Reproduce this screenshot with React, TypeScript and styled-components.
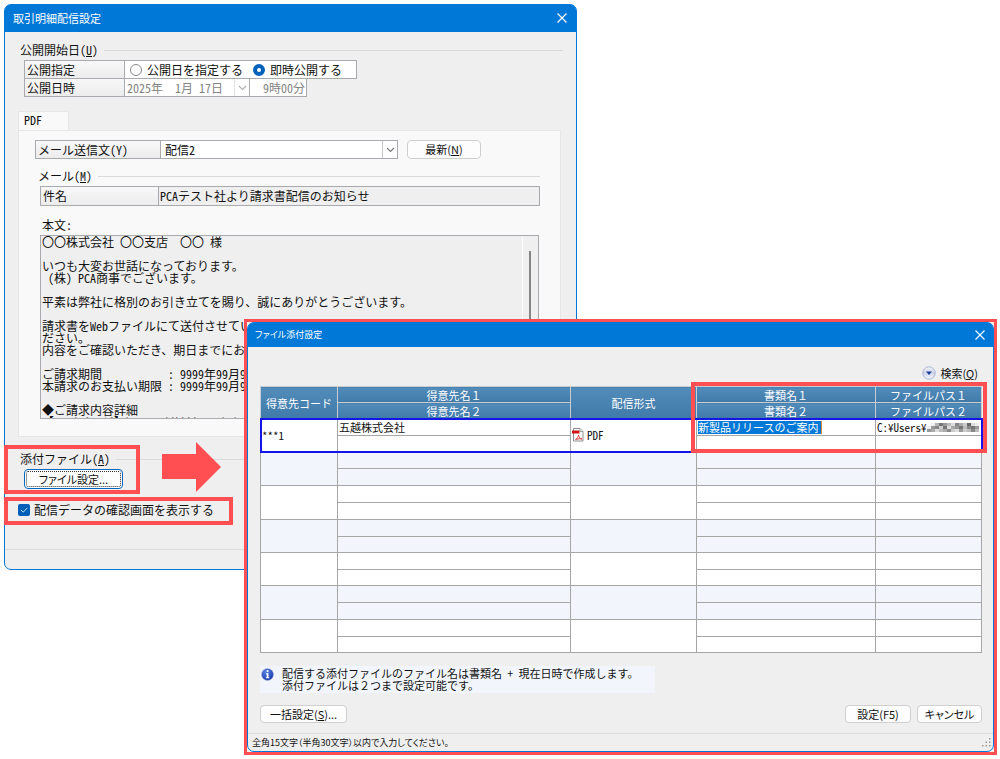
import React from "react";
import styled, { createGlobalStyle, css } from "styled-components";

const RED = "#ff4f52";
const BLUE = "#0078d7";

const GlobalStyle = createGlobalStyle`
  *, *::before, *::after { box-sizing: border-box; }
  body {
    margin: 0;
    background: #fff;
    color: #111;
    font-family: "Noto Sans CJK JP", "Liberation Sans", sans-serif;
    font-size: 12px;
    line-height: 16px;
    font-feature-settings: "hwid";
  }
  button, input, select, textarea {
    font: inherit;
    font-feature-settings: inherit;
    color: inherit;
    margin: 0;
    border-radius: 0;
  }
`;

const proportional = css`
  font-feature-settings: "palt";
`;

const Desktop = styled.main`
  position: relative;
  min-height: 100vh;
`;

/* ---------- windows ---------- */

const MainWindow = styled.section`
  position: absolute;
  left: 4px;
  top: 4px;
  width: 57.3%;
  border: 1px solid ${BLUE};
  border-radius: 7px;
  background: #efefef;
`;

const AttachFrame = styled.section`
  position: absolute;
  left: 244px;
  right: 3px;
  top: 319px;
  border: 3px solid ${RED};
  background: #efefef;
`;

const AttachWindow = styled.div`
  border: 1px solid ${BLUE};
  border-radius: 7px;
  background: #efefef;
`;

const TitleBar = styled.header<{ $compact?: boolean }>`
  display: flex;
  align-items: center;
  justify-content: space-between;
  height: ${(p) => (p.$compact ? 24 : 27)}px;
  padding: ${(p) => (p.$compact ? "0 7px" : "0 8px 1px")};
  border-radius: 5px 5px 0 0;
  background: ${BLUE};
  color: #fff;
`;

const Title = styled.h1<{ $compact?: boolean }>`
  margin: 0;
  font-size: ${(p) => (p.$compact ? 9 : 11)}px;
  font-weight: 400;
  ${(p) => p.$compact && proportional}
`;

const CloseButton = styled.button`
  display: flex;
  padding: 0;
  border: 0;
  background: none;
  color: #fff;
`;

const MainBody = styled.div`
  padding: 10px 13px 31px;
`;

const StatusBar = styled.footer<{ $h: number }>`
  display: flex;
  align-items: center;
  justify-content: space-between;
  height: ${(p) => p.$h}px;
  padding: 0 2px 0 4px;
  border-top: 1px solid #dcdcdc;
  font-size: 9px;
  ${proportional}
`;

/* ---------- form parts ---------- */

const Legend = styled.h2`
  display: flex;
  align-items: center;
  gap: 6px;
  height: 16px;
  margin: 0 0 2px;
  padding-left: 2px;
  font-size: 12px;
  font-weight: 400;
  white-space: nowrap;

  &::after {
    content: "";
    flex: 1;
    height: 1px;
    background: #dadada;
  }
`;

const FieldTable = styled.div`
  margin-left: 6px;
`;

const FieldRow = styled.div<{ $joined?: boolean }>`
  display: flex;
  height: ${(p) => (p.$joined ? 18 : 19)}px;

  & > * {
    border: 1px solid #a9a9b0;
    border-top-width: ${(p) => (p.$joined ? 0 : 1)}px;
  }
  & > * + * {
    border-left-width: 0;
  }
`;

const FieldLabel = styled.label<{ $w: number }>`
  flex: 0 0 ${(p) => p.$w}px;
  padding-left: 2px;
  background: linear-gradient(#f8f8f8, #ececec);
  line-height: 17px;
`;

const RadioCell = styled.div`
  display: flex;
  align-items: center;
  gap: 10px;
  width: 232px;
  padding-left: 5px;
  background: #fff;
`;

const RadioLabel = styled.label`
  display: flex;
  align-items: center;
  gap: 5px;
  line-height: 17px;
`;

const Radio = styled.input`
  appearance: none;
  width: 12px;
  height: 12px;
  border: 1px solid #8a8a8a;
  border-radius: 50%;
  background: #fff;

  &:checked {
    border: 4px solid #0061bd;
  }
`;

const DateCell = styled.div`
  display: flex;
  width: 125px;
  background: #fff;
`;

const DateInput = styled.input`
  flex: 1;
  min-width: 0;
  padding: 0 2px;
  border: 0;
  background: #fff;
  color: #848484;
  line-height: 16px;
  white-space: pre;
`;

const DropMark = styled.span`
  display: flex;
  align-items: center;
  justify-content: center;
  width: 15px;
  border-left: 1px solid #e2e2e2;
  color: #b0b0b0;
`;

const TimeInput = styled.input`
  width: 57px;
  padding: 0 1px;
  background: #fff;
  color: #848484;
  line-height: 16px;
  text-align: right;
`;

const Tab = styled.button`
  display: block;
  width: 51px;
  height: 19px;
  margin-top: 14px;
  padding: 0 0 2px 5px;
  border: 1px solid #e6e6e6;
  border-bottom: 0;
  background: #f9f9f9;
  text-align: left;
`;

const TabPanel = styled.div`
  margin-right: 2px;
  padding: 9px 20px 17px 16px;
  border: 1px solid #e6e6e6;
  background: #f9f9f9;
`;

const TemplateRow = styled.div`
  display: flex;
  align-items: center;
  gap: 9px;
  margin-bottom: 9px;
`;

const SelectBox = styled.span`
  position: relative;
  display: flex;
  width: 237px;
  background: #fff;
`;

const Select = styled.select`
  flex: 1;
  appearance: none;
  padding: 0 4px;
  border: 0;
  background: #fff;
  line-height: 17px;
`;

const SelectArrow = styled.span`
  position: absolute;
  inset: 0 0 0 auto;
  display: flex;
  align-items: center;
  justify-content: center;
  width: 15px;
  border-left: 1px solid #c4c4c4;
  color: #777;
  pointer-events: none;
`;

const Button = styled.button<{ $w: number; $h?: number; $focus?: boolean }>`
  width: ${(p) => p.$w}px;
  height: ${(p) => p.$h ?? 19}px;
  padding: 0;
  border: 1px solid ${(p) => (p.$focus ? "#0067c0" : "#cfcfcf")};
  border-radius: 4px;
  background: #fdfdfd;
  font-size: 11px;
  line-height: 15px;
  white-space: nowrap;
  ${proportional}
  ${(p) =>
    p.$focus &&
    css`
      outline: 1px dotted #333;
      outline-offset: -3px;
    `}
`;

const MailGroup = styled.div`
  margin-left: 3px;
`;

const MailLegend = styled(Legend)`
  padding-left: 0;
`;

const SubjectRow = styled(FieldRow)`
  height: 20px;
  margin-left: 2px;
`;

const SubjectInput = styled.input`
  flex: 1;
  min-width: 0;
  padding: 0 1px;
  background: #efefef;
  line-height: 18px;
`;

const BodyLabel = styled.label`
  display: block;
  margin: 11px 0 2px 4px;
`;

const BodyBox = styled.div`
  display: flex;
  height: 184px;
  margin: 0 1px 0 2px;
  border: 1px solid #a9a9b0;
  background: #efefef;
`;

const BodyText = styled.textarea`
  flex: 1;
  min-width: 0;
  padding: 0 1px;
  border: 0;
  background: #efefef;
  line-height: 12px;
  overflow: hidden;
  resize: none;
  white-space: pre;
`;

const ScrollTrack = styled.div`
  flex: 0 0 16px;
  padding: 15px 7px 20px 6px;
  border-left: 1px solid #fafafa;
`;

const ScrollThumb = styled.div`
  width: 2px;
  height: 110px;
  background: #858585;
`;

/* ---------- attachment section ---------- */

const AttachSection = styled.div`
  position: relative;
  margin-top: 14px;

  & > ${Button} {
    display: block;
    margin: 0 0 0 6px;
  }
`;

const ConfirmSection = styled.div`
  position: relative;
  margin-top: 13px;
`;

const CheckLabel = styled.label`
  display: flex;
  align-items: center;
  gap: 4px;
`;

const CheckWrap = styled.span`
  position: relative;
  display: flex;
`;

const CheckInput = styled.input`
  appearance: none;
  width: 12px;
  height: 12px;
  border-radius: 2px;
  background: #005fb8;
`;

const CheckMark = styled.svg`
  position: absolute;
  inset: 0;
  pointer-events: none;
`;

const Callout = styled.div<{ $box: string; $w: number; $h: number }>`
  position: absolute;
  inset: ${(p) => p.$box};
  width: ${(p) => p.$w}px;
  height: ${(p) => p.$h}px;
  border: 4px solid ${RED};
  pointer-events: none;
`;

const Arrow = styled.svg`
  position: absolute;
  left: 144px;
  top: -9px;
`;

/* ---------- attachment window ---------- */

const AttachBody = styled.div`
  padding: 18px 11px 10px 12px;
`;

const SearchRow = styled.div`
  display: flex;
  justify-content: flex-end;
  margin-bottom: 5px;
  padding-right: 4px;
`;

const SearchButton = styled.button`
  display: flex;
  align-items: center;
  gap: 4px;
  padding: 0;
  border: 0;
  background: none;
  font-size: 11px;
  ${proportional}
`;

const GridWrap = styled.div`
  position: relative;
`;

const Grid = styled.table`
  width: 100%;
  table-layout: fixed;
  border-collapse: collapse;
  border: 1px solid #a6a6a6;
  font-size: 11px;
  line-height: 14px;
`;

const Col = styled.col<{ $w?: number }>`
  width: ${(p) => (p.$w ? p.$w + "px" : "auto")};
`;

const Th = styled.th`
  height: 16px;
  padding: 0;
  border: 1px solid #c9cdd1;
  background: linear-gradient(#528cba, #407aa9);
  color: #fff;
  font-weight: 400;
  font-feature-settings: normal;
  white-space: nowrap;
`;

const Record = styled.tbody<{ $active?: boolean; $alt?: boolean }>`
  background: ${(p) => (p.$alt ? "#f2f6fc" : "#fff")};

  & > tr:first-child {
    height: 17px;
  }
  & > tr:last-child {
    height: 16px;
  }
  &:nth-of-type(3n) > tr:last-child,
  &:nth-of-type(2) > tr:last-child {
    height: 17px;
  }
  ${(p) =>
    p.$active &&
    css`
      outline: 2px solid #1414e6;
      outline-offset: -1px;
    `}
`;

const Td = styled.td`
  padding: 0 1px;
  border: 1px solid #a6a6a6;
  vertical-align: middle;
  white-space: nowrap;
  overflow: hidden;
`;

const PdfCell = styled.span`
  display: flex;
  align-items: center;
  gap: 3px;
`;

const DocNameInput = styled.input`
  display: block;
  width: 124px;
  height: 13px;
  padding: 0;
  border: 0;
  border-right: 1px solid #d98b3a;
  background: ${BLUE};
  color: #fff;
  line-height: 13px;
`;

const PathCell = styled.span`
  display: flex;
  align-items: center;
`;

const Note = styled.div`
  display: flex;
  gap: 8px;
  width: 395px;
  max-width: 100%;
  margin: 13px 0 12px;
  padding: 1px 0 2px 1px;
  background: #f2f6fc;
  font-size: 11px;
  line-height: 12px;
`;

const NoteIcon = styled.svg`
  margin-top: 1px;
`;

const NoteLine = styled.p<{ $fullWidth?: boolean }>`
  margin: 0;
  font-feature-settings: ${(p) => (p.$fullWidth ? "normal" : "inherit")};
`;

const Actions = styled.div`
  display: flex;
  gap: 6px;
`;

const Spacer = styled.span`
  flex: 1;
`;

/* ---------- drawings ---------- */

const CloseIcon = () => (
  <svg width="12" height="12" viewBox="0 0 12 12" aria-hidden="true">
    <path d="M1.5 1.5l9 9M10.5 1.5l-9 9" stroke="currentColor" strokeWidth="1.1" fill="none" />
  </svg>
);

const Chevron = () => (
  <svg width="9" height="6" viewBox="0 0 9 6" aria-hidden="true">
    <path d="M1 1l3.5 3.5L8 1" stroke="currentColor" strokeWidth="1.1" fill="none" />
  </svg>
);

const SearchIcon = () => (
  <svg width="14" height="14" viewBox="0 0 14 14" aria-hidden="true">
    <defs>
      <linearGradient id="orb" x1="0" y1="0" x2="0" y2="1">
        <stop offset="0" stopColor="#f4f5fa" />
        <stop offset="0.5" stopColor="#cfd3e8" />
        <stop offset="1" stopColor="#f6f9ff" />
      </linearGradient>
    </defs>
    <circle cx="7" cy="7" r="6.2" fill="url(#orb)" stroke="#a9b6d2" />
    <path d="M4 5.600h6L7 9z" fill="#1c3f9c" />
  </svg>
);

const PdfIcon = () => (
  <svg width="12" height="14" viewBox="0 0 12 14" aria-hidden="true">
    <path d="M1.500 .5h6.500l3 3v9.500H1.500z" fill="#fff" stroke="#8d8d8d" />
    <path d="M8 .5v3h3" fill="#eee" stroke="#8d8d8d" strokeWidth=".8" />
    <path d="M0 2.500h7.500v3H0z" fill="#cf1515" />
    <path d="M3.500 11.500c1.800-1 2.800-2.500 3-4.500.3 2.300 1.400 3.600 3.500 4-2.300-.4-4.500-.2-6.500.5z" fill="none" stroke="#d42a2a" strokeWidth=".9" />
  </svg>
);

const InfoIcon = () => (
  <NoteIcon width="13" height="13" viewBox="0 0 13 13" aria-hidden="true">
    <defs>
      <radialGradient id="info" cx=".4" cy=".3" r=".8">
        <stop offset="0" stopColor="#5c86e8" />
        <stop offset="1" stopColor="#0f2f9e" />
      </radialGradient>
    </defs>
    <circle cx="6.500" cy="6.500" r="6" fill="url(#info)" stroke="#a9b6d8" strokeWidth=".6" />
    <path d="M5.700 2.300h1.800v1.700H5.700zM5 5.200h2.500v4h.8v1H4.900v-1h.8v-3H5z" fill="#fff" />
  </NoteIcon>
);

const mosaic = [
  "#fff", "#eee", "#b5b5b5", "#777", "#999", "#bbb", "#ddd", "#888", "#aaa", "#ccc", "#666", "#ddd", "#eee",
  "#eee", "#999", "#888", "#ccc", "#777", "#ddd", "#aaa", "#999", "#777", "#bbb", "#888", "#777", "#999",
  "#999", "#aaa", "#ddd", "#bbb", "#aaa", "#888", "#ccc", "#ddd", "#999", "#ccc", "#bbb", "#888", "#bbb",
];

const Mosaic = () => (
  <svg width="52" height="9" viewBox="0 0 52 9" role="img" aria-label="非表示">
    {mosaic.map((c, i) => (
      <rect key={i} x={(i % 13) * 4} y={Math.floor(i / 13) * 3} width="4" height="3" fill={c} />
    ))}
  </svg>
);

const Grip = () => (
  <svg width="9" height="9" viewBox="0 0 9 9" fill="#9a9a9a" aria-hidden="true">
    <path d="M7 0h1.500v1.500H7zM7 3.500h1.500V5H7zM7 7h1.500v1.500H7zM3.500 3.500H5V5H3.500zM3.500 7H5v1.500H3.500zM0 7h1.500v1.500H0z" />
  </svg>
);

/* ---------- data ---------- */

const mailBody = `〇〇株式会社 〇〇支店　 〇〇 様

いつも大変お世話になっております。
 （株） PCA商事でございます。

平素は弊社に格別のお引き立てを賜り、誠にありがとうございます。

請求書をWebファイルにて送付させていただきますので、ご確認く
ださい。
内容をご確認いただき、期日までにお支払いください。

ご請求期間　　　　　　　　　　 ： 9999年99月99日
本請求のお支払い期限 ： 9999年99月99日

◆ご請求内容詳細
【マイページ】https://****.pcahub.jp/`;

const emptyRecords = [1, 2, 3, 4, 5, 6];

export default function App() {
  return (
    <>
      <GlobalStyle />
      <Desktop>
        <MainWindow aria-label="取引明細配信設定">
          <TitleBar>
            <Title>取引明細配信設定</Title>
            <CloseButton type="button" aria-label="閉じる"><CloseIcon /></CloseButton>
          </TitleBar>
          <MainBody>
            <Legend id="start"><span>公開開始日(<u>U</u>)</span></Legend>
            <FieldTable role="group" aria-labelledby="start">
              <FieldRow>
                <FieldLabel as="span" $w={101}>公開指定</FieldLabel>
                <RadioCell>
                  <RadioLabel><Radio type="radio" name="open" />公開日を指定する</RadioLabel>
                  <RadioLabel><Radio type="radio" name="open" defaultChecked />即時公開する</RadioLabel>
                </RadioCell>
              </FieldRow>
              <FieldRow $joined>
                <FieldLabel htmlFor="date" $w={101}>公開日時</FieldLabel>
                <DateCell>
                  <DateInput id="date" disabled defaultValue="2025年  1月 17日" />
                  <DropMark><Chevron /></DropMark>
                </DateCell>
                <TimeInput aria-label="公開時刻" disabled defaultValue="9時00分" />
              </FieldRow>
            </FieldTable>

            <Tab type="button" role="tab" aria-selected="true">PDF</Tab>
            <TabPanel>
              <TemplateRow>
                <FieldRow>
                  <FieldLabel htmlFor="template" $w={126}>メール送信文(Y)</FieldLabel>
                  <SelectBox>
                    <Select id="template" defaultValue="2">
                      <option value="2">配信2</option>
                    </Select>
                    <SelectArrow><Chevron /></SelectArrow>
                  </SelectBox>
                </FieldRow>
                <Button type="button" $w={74}>最新(<u>N</u>)</Button>
              </TemplateRow>
              <MailGroup>
                <MailLegend as="h3"><span>メール(<u>M</u>)</span></MailLegend>
                <SubjectRow>
                  <FieldLabel htmlFor="subject" $w={119}>件名</FieldLabel>
                  <SubjectInput id="subject" readOnly defaultValue="PCAテスト社より請求書配信のお知らせ" />
                </SubjectRow>
                <BodyLabel htmlFor="body">本文:</BodyLabel>
                <BodyBox>
                  <BodyText id="body" readOnly wrap="off" defaultValue={mailBody} />
                  <ScrollTrack><ScrollThumb /></ScrollTrack>
                </BodyBox>
              </MailGroup>
            </TabPanel>

            <AttachSection>
              <Legend><span>添付ファイル(<u>A</u>)</span></Legend>
              <Button type="button" $w={99} $h={20} $focus>ファイル設定...</Button>
              <Callout $box="-6px auto auto -14px" $w={136} $h={49} />
              <Arrow width="59" height="50" viewBox="0 0 59 50" aria-hidden="true">
                <path d="M0 12h34V0l25 25-25 25V37H0z" fill={RED} />
              </Arrow>
            </AttachSection>
            <ConfirmSection>
              <CheckLabel>
                <CheckWrap>
                  <CheckInput type="checkbox" defaultChecked />
                  <CheckMark width="12" height="12" viewBox="0 0 12 12" aria-hidden="true">
                    <path d="M3 6l2.200 2.200L9.200 4" stroke="#cfe2f4" fill="none" />
                  </CheckMark>
                </CheckWrap>
                配信データの確認画面を表示する
              </CheckLabel>
              <Callout $box="-5px auto auto -14px" $w={229} $h={28} />
            </ConfirmSection>
          </MainBody>
          <StatusBar $h={20} />
        </MainWindow>

        <AttachFrame aria-label="ファイル添付設定">
          <AttachWindow>
            <TitleBar $compact>
              <Title $compact as="h2">ファイル添付設定</Title>
              <CloseButton type="button" aria-label="閉じる"><CloseIcon /></CloseButton>
            </TitleBar>
            <AttachBody>
              <SearchRow>
                <SearchButton type="button"><SearchIcon /><span>検索(<u>Q</u>)</span></SearchButton>
              </SearchRow>
              <GridWrap>
                <Grid>
                  <colgroup>
                    <Col $w={77} />
                    <Col />
                    <Col $w={126} />
                    <Col $w={179} />
                    <Col $w={106} />
                  </colgroup>
                  <thead>
                    <tr>
                      <Th rowSpan={2}>得意先コード</Th>
                      <Th>得意先名１</Th>
                      <Th rowSpan={2}>配信形式</Th>
                      <Th>書類名１</Th>
                      <Th>ファイルパス１</Th>
                    </tr>
                    <tr>
                      <Th>得意先名２</Th>
                      <Th>書類名２</Th>
                      <Th>ファイルパス２</Th>
                    </tr>
                  </thead>
                  <Record $active>
                    <tr>
                      <Td rowSpan={2}>***1</Td>
                      <Td>五越株式会社</Td>
                      <Td rowSpan={2}><PdfCell><PdfIcon />PDF</PdfCell></Td>
                      <Td><DocNameInput aria-label="書類名１" defaultValue="新製品リリースのご案内" /></Td>
                      <Td><PathCell>C:¥Users¥<Mosaic /></PathCell></Td>
                    </tr>
                    <tr><Td /><Td /><Td /></tr>
                  </Record>
                  {emptyRecords.map((n) => (
                    <Record key={n} $alt={n % 2 === 1}>
                      <tr><Td rowSpan={2} /><Td /><Td rowSpan={2} /><Td /><Td /></tr>
                      <tr><Td /><Td /><Td /></tr>
                    </Record>
                  ))}
                </Grid>
                <Callout $box="-4px -5px auto auto" $w={296} $h={71} />
              </GridWrap>
              <Note>
                <InfoIcon />
                <div>
                  <NoteLine>配信する添付ファイルのファイル名は書類名 + 現在日時で作成します。</NoteLine>
                  <NoteLine $fullWidth>添付ファイルは２つまで設定可能です。</NoteLine>
                </div>
              </Note>
              <Actions>
                <Button type="button" $w={87} $h={18}>一括設定(<u>S</u>)...</Button>
                <Spacer />
                <Button type="button" $w={66} $h={18}>設定(F5)</Button>
                <Button type="button" $w={65} $h={18}>キャンセル</Button>
              </Actions>
            </AttachBody>
            <StatusBar $h={18}>
              <span>全角15文字（半角30文字）以内で入力してください。</span>
              <Grip />
            </StatusBar>
          </AttachWindow>
        </AttachFrame>
      </Desktop>
    </>
  );
}
